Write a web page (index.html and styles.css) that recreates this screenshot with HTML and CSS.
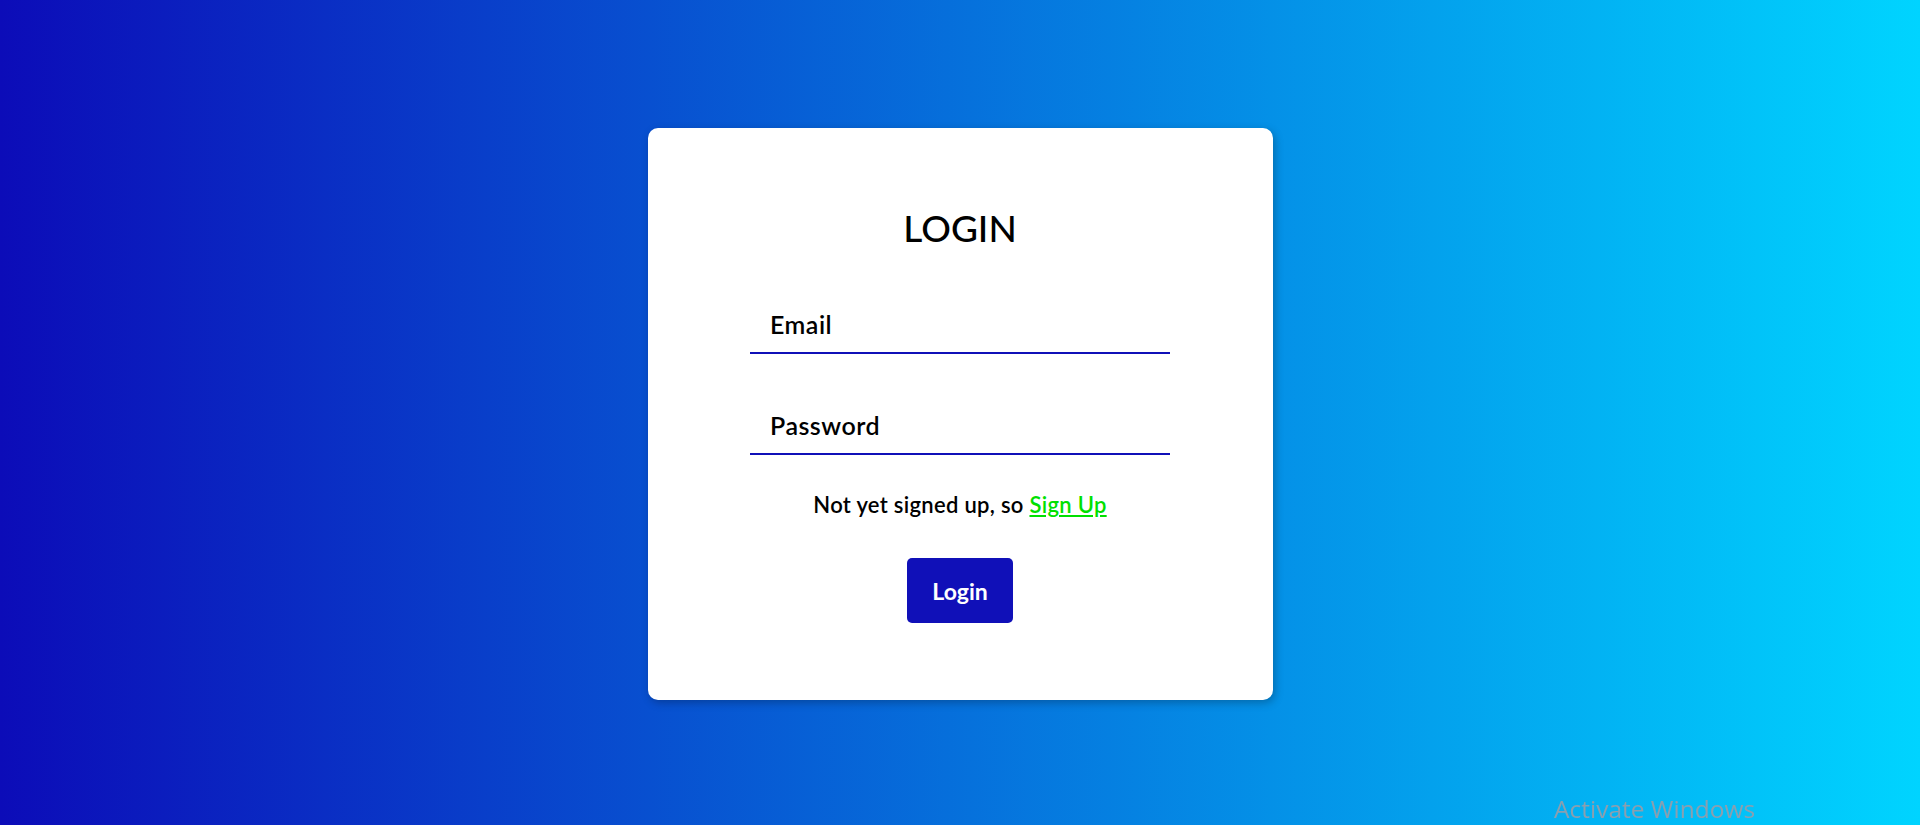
FILE: index.html
```html
<!DOCTYPE html>
<html lang="en">
<head>
<meta charset="utf-8">
<title>Login</title>
<link rel="stylesheet" href="styles.css">
</head>
<body>
  <main class="page">
    <form class="card">
      <h1 class="title">LOGIN</h1>
      <div class="field">
        <input class="input" type="email" placeholder="Email">
      </div>
      <div class="field">
        <input class="input" type="password" placeholder="Password">
      </div>
      <p class="note">Not yet signed up, so <a class="link" href="#">Sign Up</a></p>
      <button class="btn" type="button">Login</button>
    </form>
  </main>
  <div class="watermark">Activate Windows</div>
</body>
</html>
```

FILE: styles.css
```css
* { box-sizing: border-box; }

html, body {
  margin: 0;
  height: 100%;
}

body {
  font-family: Lato, "Open Sans", sans-serif;
  background: linear-gradient(to right, #0c0cb8 0%, #00d4ff 100%);
  overflow: hidden;
}

.page {
  height: 100%;
  display: flex;
  align-items: center;
  justify-content: center;
  padding-top: 3px;
}

.card {
  width: 625px;
  height: 572px;
  background: #ffffff;
  border-radius: 10px;
  box-shadow: 2px 3px 8px rgba(0, 0, 0, 0.25);
  display: flex;
  flex-direction: column;
  align-items: center;
  padding-top: 76px;
}

.title {
  margin: 0;
  font-size: 37px;
  line-height: 48px;
  font-weight: 500;
  color: #000;
}

.field {
  width: 420px;
  margin-top: 52px;
}

.field + .field {
  margin-top: 51px;
}

.input {
  display: block;
  width: 100%;
  height: 50px;
  border: none;
  border-bottom: 2px solid #1010b8;
  outline: none;
  padding: 0 20px 8px;
  font-family: inherit;
  font-size: 25px;
  letter-spacing: 0.5px;
  font-weight: 600;
  color: #000;
  background: transparent;
}

.input::placeholder {
  color: #000;
  opacity: 1;
}

.note {
  margin: 38px 0 0;
  font-size: 22px;
  line-height: 24px;
  letter-spacing: 0.3px;
  font-weight: 600;
  color: #000;
}

.link {
  color: #00e000;
  text-decoration: underline;
}

.btn {
  margin-top: 41px;
  width: 106px;
  height: 65px;
  border: none;
  border-radius: 5px;
  background: #1010b8;
  color: #fff;
  font-family: inherit;
  font-size: 23px;
  font-weight: 700;
  cursor: pointer;
}

.watermark {
  position: fixed;
  left: 1554px;
  bottom: 0;
  font-family: "Open Sans", "Noto Sans", sans-serif;
  font-size: 24.5px;
  font-weight: 400;
  color: #8a9fb0;
}
```
